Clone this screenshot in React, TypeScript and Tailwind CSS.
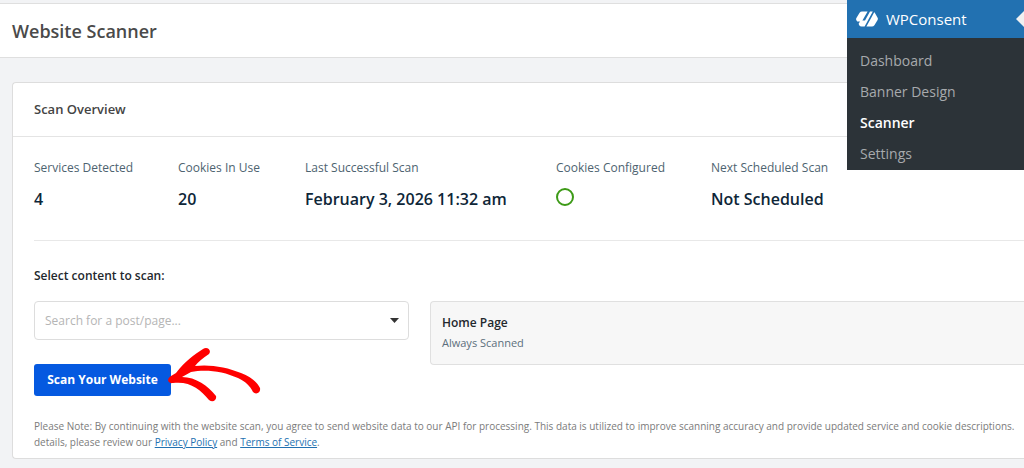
import React from 'react'

const stats = [
  { label: 'Services Detected', value: '4' },
  { label: 'Cookies In Use', value: '20' },
  { label: 'Last Successful Scan', value: 'February 3, 2026 11:32 am' },
  { label: 'Cookies Configured', value: null },
  { label: 'Next Scheduled Scan', value: 'Not Scheduled' },
]

const menuItems = ['Dashboard', 'Banner Design', 'Scanner', 'Settings']

function Logo() {
  return (
    <svg className="w-[22px] h-4" viewBox="0 0 22 16" fill="#fff" aria-hidden="true">
      <path d="M6 0.5H11.6L6.4 9.6H9L14 0.5H16.8L8.6 15.5H5.6Q4 15.5 3.2 14.2L2.6 12.8L4 10.4H1.2L0.4 9.3Q-0.2 8.2 0.4 7L3.6 1.8Q4.6 0.5 6 0.5Z" />
      <path d="M16 15.5H10.4L15.4 6.4L18.2 1.2L18.8 1.8L21.6 6.7Q22.2 7.8 21.6 9L18.4 14.2Q17.4 15.5 16 15.5Z" />
    </svg>
  )
}

function AdminMenu() {
  return (
    <nav className="absolute top-0 right-0 w-[177px] bg-[#2c3338]" aria-label="WPConsent">
      <a href="#" className="relative flex items-center gap-2 h-[38px] pl-[9px] bg-[#2271b1] text-white text-[15px]">
        <Logo />
        WPConsent
        <svg className="absolute right-0 w-2 h-4" viewBox="0 0 8 16" fill="#f0f0f1" aria-hidden="true">
          <path d="M8 0V16L0 8Z" />
        </svg>
      </a>
      <ul className="pt-[7px] pb-px">
        {menuItems.map((item) => (
          <li key={item}>
            <a
              href="#"
              className={
                item === 'Scanner'
                  ? 'block pl-[13px] text-sm leading-[31px] font-semibold text-white'
                  : 'block pl-[13px] text-sm leading-[31px] text-[#a7aaad]'
              }
            >
              {item}
            </a>
          </li>
        ))}
      </ul>
    </nav>
  )
}

function ScanArrow() {
  return (
    <svg
      className="absolute left-[131px] -top-[18px] w-24 h-16 pointer-events-none"
      viewBox="0 0 96 64"
      fill="#f00"
      aria-hidden="true"
    >
      <path d="M38 3C42 0 47 4 44 8C38 12 33 16 30 20C44 18 62 21 76 27C86 31 92 36 95 42C96 47 91 49 88 46C85 40 81 36 73 32C58 25 40 23 26 26L17 31C31 31 43 40 51 50C52 54 48 57 44 54C35 43 25 35 8 37C3 38 1 33 6 30L11 27C20 15 29 9 38 3Z" />
    </svg>
  )
}

function App() {
  return (
    <div className="relative min-h-screen overflow-hidden bg-[#f2f3f5] font-['Open_Sans',sans-serif]">
      <header className="mt-[3px] flex items-center h-[55px] px-3 bg-white border-y border-[#dfdfdf]">
        <h1 className="text-lg font-semibold text-[#4a4a4a]">Website Scanner</h1>
      </header>

      <main className="pt-6 pl-3">
        <section className="bg-white border border-r-0 border-[#ddd] rounded-l">
          <div className="flex items-center h-[54px] px-[21px] border-b border-[#e4e4e4]">
            <h2 className="text-[13px] font-semibold text-[#444]">Scan Overview</h2>
          </div>

          <div className="pl-[21px] pt-[21px]">
            <dl className="grid grid-cols-[100px_83px_207px_111px_1fr] gap-11 h-[83px] border-b border-[#e8e8e8] whitespace-nowrap">
              {stats.map((stat) => (
                <div key={stat.label}>
                  <dt className="text-xs leading-5 text-[#4d6370]">{stat.label}</dt>
                  <dd className="mt-[7px] text-base leading-7 font-semibold text-[#0e2638]">
                    {stat.value ?? (
                      <span className="block size-[18px] mt-[10px] rounded-full border-2 border-[#3d9a17]" role="img" aria-label="Configured" />
                    )}
                  </dd>
                </div>
              ))}
            </dl>

            <label htmlFor="content" className="block pt-[25px] text-xs leading-5 font-semibold text-[#23282d]">
              Select content to scan:
            </label>

            <div className="flex gap-[21px] mt-[15px]">
              <div className="w-[375px]">
                <div className="relative">
                  <input
                    id="content"
                    type="text"
                    placeholder="Search for a post/page..."
                    className="w-full h-[39px] px-[10px] text-xs bg-white border border-[#ddd] rounded placeholder:text-[#b5b5b5]"
                  />
                  <svg className="absolute right-[10px] top-[17px] w-[9px] h-[5px]" viewBox="0 0 9 5" fill="#333" aria-hidden="true">
                    <path d="M0 0H9L4.5 5Z" />
                  </svg>
                </div>
                <div className="relative mt-6">
                  <button type="button" className="block w-[137px] h-8 rounded-[3px] bg-[#0559e0] text-xs font-bold text-white">
                    Scan Your Website
                  </button>
                  <ScanArrow />
                </div>
              </div>
              <div className="flex-1 h-16 pt-[11px] pl-[11px] bg-[#f7f7f7] border border-r-0 border-[#e0e0e0] rounded-l">
                <h3 className="text-xs leading-5 font-semibold text-[#23282d]">Home Page</h3>
                <p className="text-[11px] leading-5 text-[#5b6f7c]">Always Scanned</p>
              </div>
            </div>

            <p className="pt-[22px] pb-2 text-[10px] leading-4 text-[#7b7b7b] whitespace-nowrap">
              Please Note: By continuing with the website scan, you agree to send website data to our API for processing. This data is utilized to improve scanning accuracy and provide updated service and cookie descriptions.
              <br />
              details, please review our{' '}
              <a href="#" className="text-[#2271b1] underline">Privacy Policy</a> and{' '}
              <a href="#" className="text-[#2271b1] underline">Terms of Service</a>.
            </p>
          </div>
        </section>
      </main>

      <AdminMenu />
    </div>
  )
}

export default App
